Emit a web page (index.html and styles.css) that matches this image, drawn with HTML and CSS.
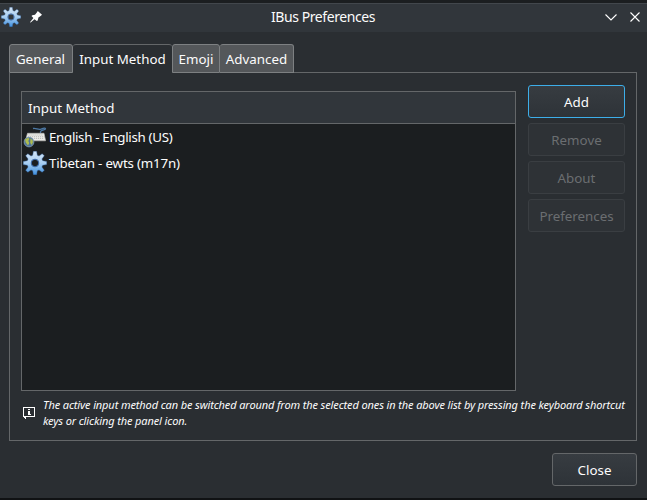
FILE: index.html
```html
<!DOCTYPE html>
<html lang="en">
<head>
<meta charset="utf-8">
<title>IBus Preferences</title>
<link rel="stylesheet" href="styles.css">
</head>
<body>
<svg class="defs" width="0" height="0" aria-hidden="true">
  <defs>
    <linearGradient id="blue" x1="0" y1="0" x2="0" y2="24" gradientUnits="userSpaceOnUse">
      <stop offset="0" stop-color="#d3e4f5"/><stop offset=".5" stop-color="#a9cff2"/><stop offset="1" stop-color="#3b8ddd"/>
    </linearGradient>
    <mask id="hole" maskUnits="userSpaceOnUse" x="0" y="0" width="24" height="24">
      <rect width="24" height="24" fill="#fff"/><circle cx="12" cy="12" r="3.300" fill="#000"/>
    </mask>
    <symbol id="gear" viewBox="0 0 24 24">
      <g mask="url(#hole)">
        <path fill="url(#blue)" stroke="#3668a8" stroke-width=".4" stroke-linejoin="round" d="M10.400.3h3.200l.7 4 1.700.8 3.200-2.400 2.100 2.100-2.400 3.200.8 1.700 4 .7v3.200l-4 .7-.8 1.700 2.400 3.200-2.100 2.100-3.200-2.400-1.700.8-.7 4h-3.200l-.7-4-1.700-.8-3.200 2.400-2.100-2.100 2.400-3.200-.8-1.700-4-.7v-3.200l4-.7.8-1.700-2.400-3.200 2.100-2.100 3.200 2.400 1.700-.8z"/>
      </g>
      <circle cx="12" cy="12" r="3.800" fill="none" stroke="#315d9b" stroke-width="1"/>
    </symbol>
  </defs>
</svg>
<div class="window">
  <header class="titlebar">
    <svg class="app-icon" width="20" height="20"><use href="#gear"/></svg>
    <svg class="pin" width="12" height="12" viewBox="0 0 12 12"><path fill="#fff" d="M7.800 0 12 3.700 10.600 5 8.400 6.600 7.700 9.400 6.800 10 4.500 8.200.7 11.400 0 11.200 3.400 7.100 1.500 5.100 2.300 4.200 5 3.700 6.800 1.600z"/></svg>
    <h1 class="title">IBus Preferences</h1>
    <svg class="controls" width="36" height="12" viewBox="0 0 36 12"><path fill="none" stroke="#fff" stroke-width="1.1" d="M.5 3.500 6 9l5.500-5.500M25.500 1.500l9 9M34.500 1.500l-9 9"/></svg>
  </header>
  <nav class="tabs">
    <span class="tab general">General</span>
    <span class="tab active">Input Method</span>
    <span class="tab emoji">Emoji</span>
    <span class="tab advanced">Advanced</span>
    <span class="tab-line"></span>
  </nav>
  <main class="panel">
    <div class="content">
      <section class="list">
        <h2 class="list-header">Input Method</h2>
        <div class="row">
          <svg class="row-icon" width="24" height="24" viewBox="0 0 24 24">
            <path fill="none" stroke="#4d79a5" stroke-width="1.300" d="M10 3.500c3-.8 5 1.600 8 .6s4.500-1.400 4.500-.2-6 .8-5 4.200"/>
            <path fill="#eeeeea" stroke="#b7b9b5" stroke-width=".7" d="M4.500 8.300h16.500l1.600 7.500H2.500z"/>
            <path stroke="#b4b6b1" stroke-width=".9" stroke-dasharray="1.200 .8" d="M5.500 10h14.500M5 11.700h15.500M5 13.400h16"/>
            <circle cx="6" cy="17" r="4.900" fill="#4e7297" stroke="#94adbd" stroke-width=".7"/>
            <path fill="#aebc4f" d="M2 14.500 5 12.700l1.500 1-1.200 2.300 1 2L5 20.400l-2.300-2.900zM7.500 13.200l2.300 2.300v2.500l-1.600 2-1-2.500z"/>
          </svg>
          <span class="english">English - English (US)</span>
        </div>
        <div class="row">
          <svg class="row-icon" width="24" height="24"><use href="#gear"/></svg>
          <span class="tibetan">Tibetan - ewts (m17n)</span>
        </div>
      </section>
      <aside class="actions">
        <button class="button focused">Add</button>
        <button class="button" disabled>Remove</button>
        <button class="button" disabled>About</button>
        <button class="button" disabled>Preferences</button>
      </aside>
    </div>
    <div class="hint">
      <svg class="info" width="12" height="12" viewBox="0 0 12 12" shape-rendering="crispEdges"><path fill="#fff" fill-rule="evenodd" d="M0 0h12v10H3v2H2v-1H1v-1H0zM1 1v8h10V1zM5 2h2v1H5zM5 4h2v3h1v1H5z"/></svg>
      <p class="hint-text">The active input method can be switched around from the selected ones in the above list by pressing the keyboard shortcut<br>keys or clicking the panel icon.</p>
    </div>
  </main>
  <footer class="footer"><button class="button close">Close</button></footer>
</div>
</body>
</html>
```
FILE: styles.css
```css
* { box-sizing: border-box; }
body { margin: 0; background: #2a2e32; color: #fcfcfc; font: 13.33px/18px "Noto Sans", sans-serif; overflow: hidden; }
.defs { position: absolute; }
.window { width: 647px; height: 500px; border-top: 3px solid #1b1e20; border-bottom: 2px solid #101214; display: flex; flex-direction: column; }
.titlebar { height: 29px; flex: none; display: flex; align-items: center; background: #31363b; border-top: 1px solid #42474c; padding: 0 6px 2px 1px; }
.pin { margin-left: 9px; }
.title { flex: 1; margin: 0; padding-right: 1px; text-align: center; font-size: 14px; letter-spacing: -.42px; font-weight: 400; }
.tabs { display: flex; height: 29px; margin: 12px 10px 0 9px; flex: none; }
.tab { height: 29px; padding-top: 5px; text-align: center; background: #54575a; border: 1px solid #7d8082; border-radius: 3px 3px 0 0; white-space: nowrap; }
.general { width: 64px; padding-right: 1px; }
.active { width: 99px; background: #2a2e32; border-color: #646769; border-width: 1px 0 0; }
.emoji { width: 48px; }
.advanced { width: 74px; border-left-width: 0; }
.tab-line { flex: 1; border-bottom: 1px solid #646769; }
.panel { height: 368px; flex: none; margin: 0 10px 0 9px; border: 1px solid #646769; border-top: 0; padding: 12px 11px 0; }
.content { display: flex; gap: 12px; }
.list { width: 495px; height: 300px; margin-top: 6px; border: 1px solid #646769; background: #1b1e20; }
.list-header { height: 32px; margin: 0; padding: 7px 6px; background: #31363b; border-bottom: 1px solid #646769; font-size: 13.33px; font-weight: 400; }
.row { height: 26px; display: flex; align-items: center; gap: 2px; padding-left: 1px; }
.english { letter-spacing: -.32px; }
.tibetan { letter-spacing: -.18px; }
.actions { width: 97px; display: flex; flex-direction: column; gap: 5px; }
.button { width: 97px; height: 33px; padding: 1px 0 0; border: 1px solid #646769; border-radius: 3px; background: linear-gradient(#373c41, #2e3338); color: #fcfcfc; font: inherit; }
.button:disabled { background: #2e3236; border-color: #3a3e42; color: #6b6e71; }
.button.focused { border-color: #3daee9; }
.hint { display: flex; gap: 8px; padding: 6px 0 0 2px; }
.info { flex: none; margin-top: 10px; }
.hint-text { margin: 0; font-size: 11px; line-height: 16px; letter-spacing: -.117px; font-style: italic; white-space: nowrap; }
.footer { display: flex; justify-content: flex-end; padding: 12px 10px 0 0; }
.close { width: 85px; }
```
